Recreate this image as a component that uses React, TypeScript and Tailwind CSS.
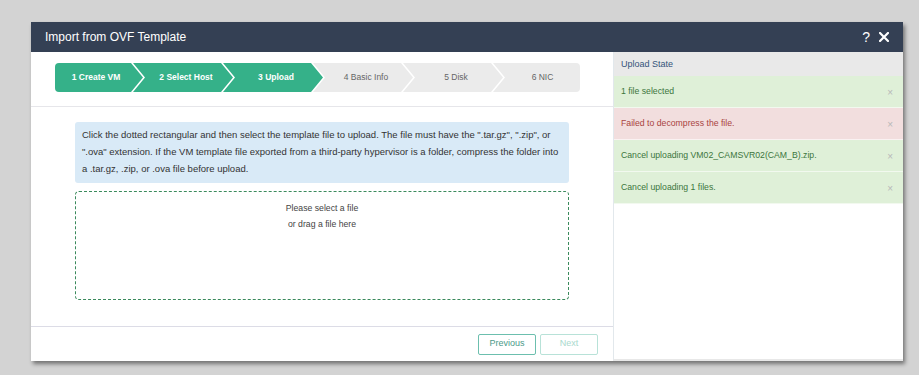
import React from "react";

const clipFirst =
  "[clip-path:polygon(0_0,calc(100%_-_12px)_0,100%_50%,calc(100%_-_12px)_100%,0_100%)]";
const clipMid =
  "[clip-path:polygon(0_0,calc(100%_-_12px)_0,100%_50%,calc(100%_-_12px)_100%,0_100%,12px_50%)]";
const clipLast = "[clip-path:polygon(0_0,100%_0,100%_100%,0_100%,12px_50%)]";

const steps = [
  { label: "1 Create VM", active: true },
  { label: "2 Select Host", active: true },
  { label: "3 Upload", active: true },
  { label: "4 Basic Info", active: false },
  { label: "5 Disk", active: false },
  { label: "6 NIC", active: false },
];

function Stepper() {
  return (
    <div className="flex h-[29px] w-[525px] overflow-hidden rounded-[4px]">
      {steps.map((s, i) => {
        const first = i === 0;
        const last = i === steps.length - 1;
        const shape = first ? clipFirst : last ? clipLast : clipMid;
        const width = first ? "w-[88px] pl-[4px] pr-[10px]" : last ? "w-[87px] -ml-[10px] pl-[12px]" : "w-[100px] -ml-[10px] pl-[14px] pr-[8px]";
        const color = s.active
          ? "bg-[#35b189] text-white font-bold"
          : "bg-[#ebebeb] text-[#666666]";
        return (
          <div
            key={s.label}
            className={`${shape} ${width} ${color} flex h-full shrink-0 items-center justify-center text-[8.5px]`}
          >
            {s.label}
          </div>
        );
      })}
    </div>
  );
}

const alerts = [
  { text: "1 file selected", kind: "ok" },
  { text: "Failed to decompress the file.", kind: "err" },
  { text: "Cancel uploading VM02_CAMSVR02(CAM_B).zip.", kind: "ok" },
  { text: "Cancel uploading 1 files.", kind: "ok" },
];

export default function App() {
  return (
    <div
      className="h-[375px] w-[919px] bg-[#d3d3d3] pl-[31px] pt-[22px]"
      style={{ fontFamily: '"Liberation Sans", Arial, sans-serif' }}
    >
      <div className="flex h-[339px] w-[872px] flex-col bg-white shadow-[2px_3px_4px_rgba(0,0,0,0.45)]">
        {/* Header */}
        <div className="flex h-[30px] shrink-0 items-center justify-between bg-[#344054] pl-[14px] pr-[14px] text-white">
          <span className="text-[12px]">Import from OVF Template</span>
          <div className="flex items-center gap-[9px]">
            <span className="text-[14px] leading-none">?</span>
            <svg width="10" height="10" viewBox="0 0 10 10">
              <path d="M1 1L9 9M9 1L1 9" stroke="white" strokeWidth="2.2" strokeLinecap="square" />
            </svg>
          </div>
        </div>

        <div className="flex min-h-0 flex-1">
          {/* Left panel */}
          <div className="flex w-[582px] shrink-0 flex-col">
            <div className="border-b border-[#e6e6ea] px-[24px] pb-[14px] pt-[11px]">
              <Stepper />
            </div>
            <div className="flex-1 px-[44px] pt-[15px]">
              <div className="rounded-[3px] bg-[#d9eaf7] px-[7px] pb-[6px] pt-[4px] text-[9.5px] leading-[17px] text-[#333333]">
                Click the dotted rectangular and then select the template file to upload. The file must have the ".tar.gz", ".zip", or ".ova" extension. If the VM template file exported from a third-party hypervisor is a folder, compress the folder into a .tar.gz, .zip, or .ova file before upload.
              </div>
              <div className="mt-[8px] flex h-[109px] flex-col items-center rounded-[4px] border border-dashed border-[#3b8a5c] pt-[8px] text-[8.7px] leading-[16px] text-[#444444]">
                <span>Please select a file</span>
                <span>or drag a file here</span>
              </div>
            </div>
            <div className="flex h-[35px] shrink-0 items-center justify-end gap-[4px] border-t border-[#dcdce6] pr-[15px]">
              <button className="h-[21px] w-[58px] rounded-[2px] border border-[#6cbfae] text-[9px] text-[#4b9a89]">
                Previous
              </button>
              <button className="h-[21px] w-[58px] rounded-[2px] border border-[#b8e2d8] text-[9px] text-[#a9d9cd]">
                Next
              </button>
            </div>
          </div>

          {/* Right panel */}
          <div className="flex w-[290px] shrink-0 flex-col border-b-2 border-l border-b-[#e8e8e8] border-l-[#e2e8ec]">
            <div className="flex h-[24px] shrink-0 items-center bg-[#e9e9e9] pl-[7px] pt-[1px] text-[9px] text-[#34547a]">
              Upload State
            </div>
            {alerts.map((a) => (
              <div
                key={a.text}
                className={`flex h-[32px] shrink-0 items-center justify-between border-b border-white/60 pl-[7px] pr-[10px] pt-[1px] text-[8.7px] ${
                  a.kind === "ok" ? "bg-[#dff0d8] text-[#3c763d]" : "bg-[#f2dede] text-[#a94442]"
                }`}
              >
                <span>{a.text}</span>
                <span className="text-[10px] text-[#b8b8b8]">×</span>
              </div>
            ))}
            <div className="flex-1 bg-white" />
          </div>
        </div>
      </div>
    </div>
  );
}
